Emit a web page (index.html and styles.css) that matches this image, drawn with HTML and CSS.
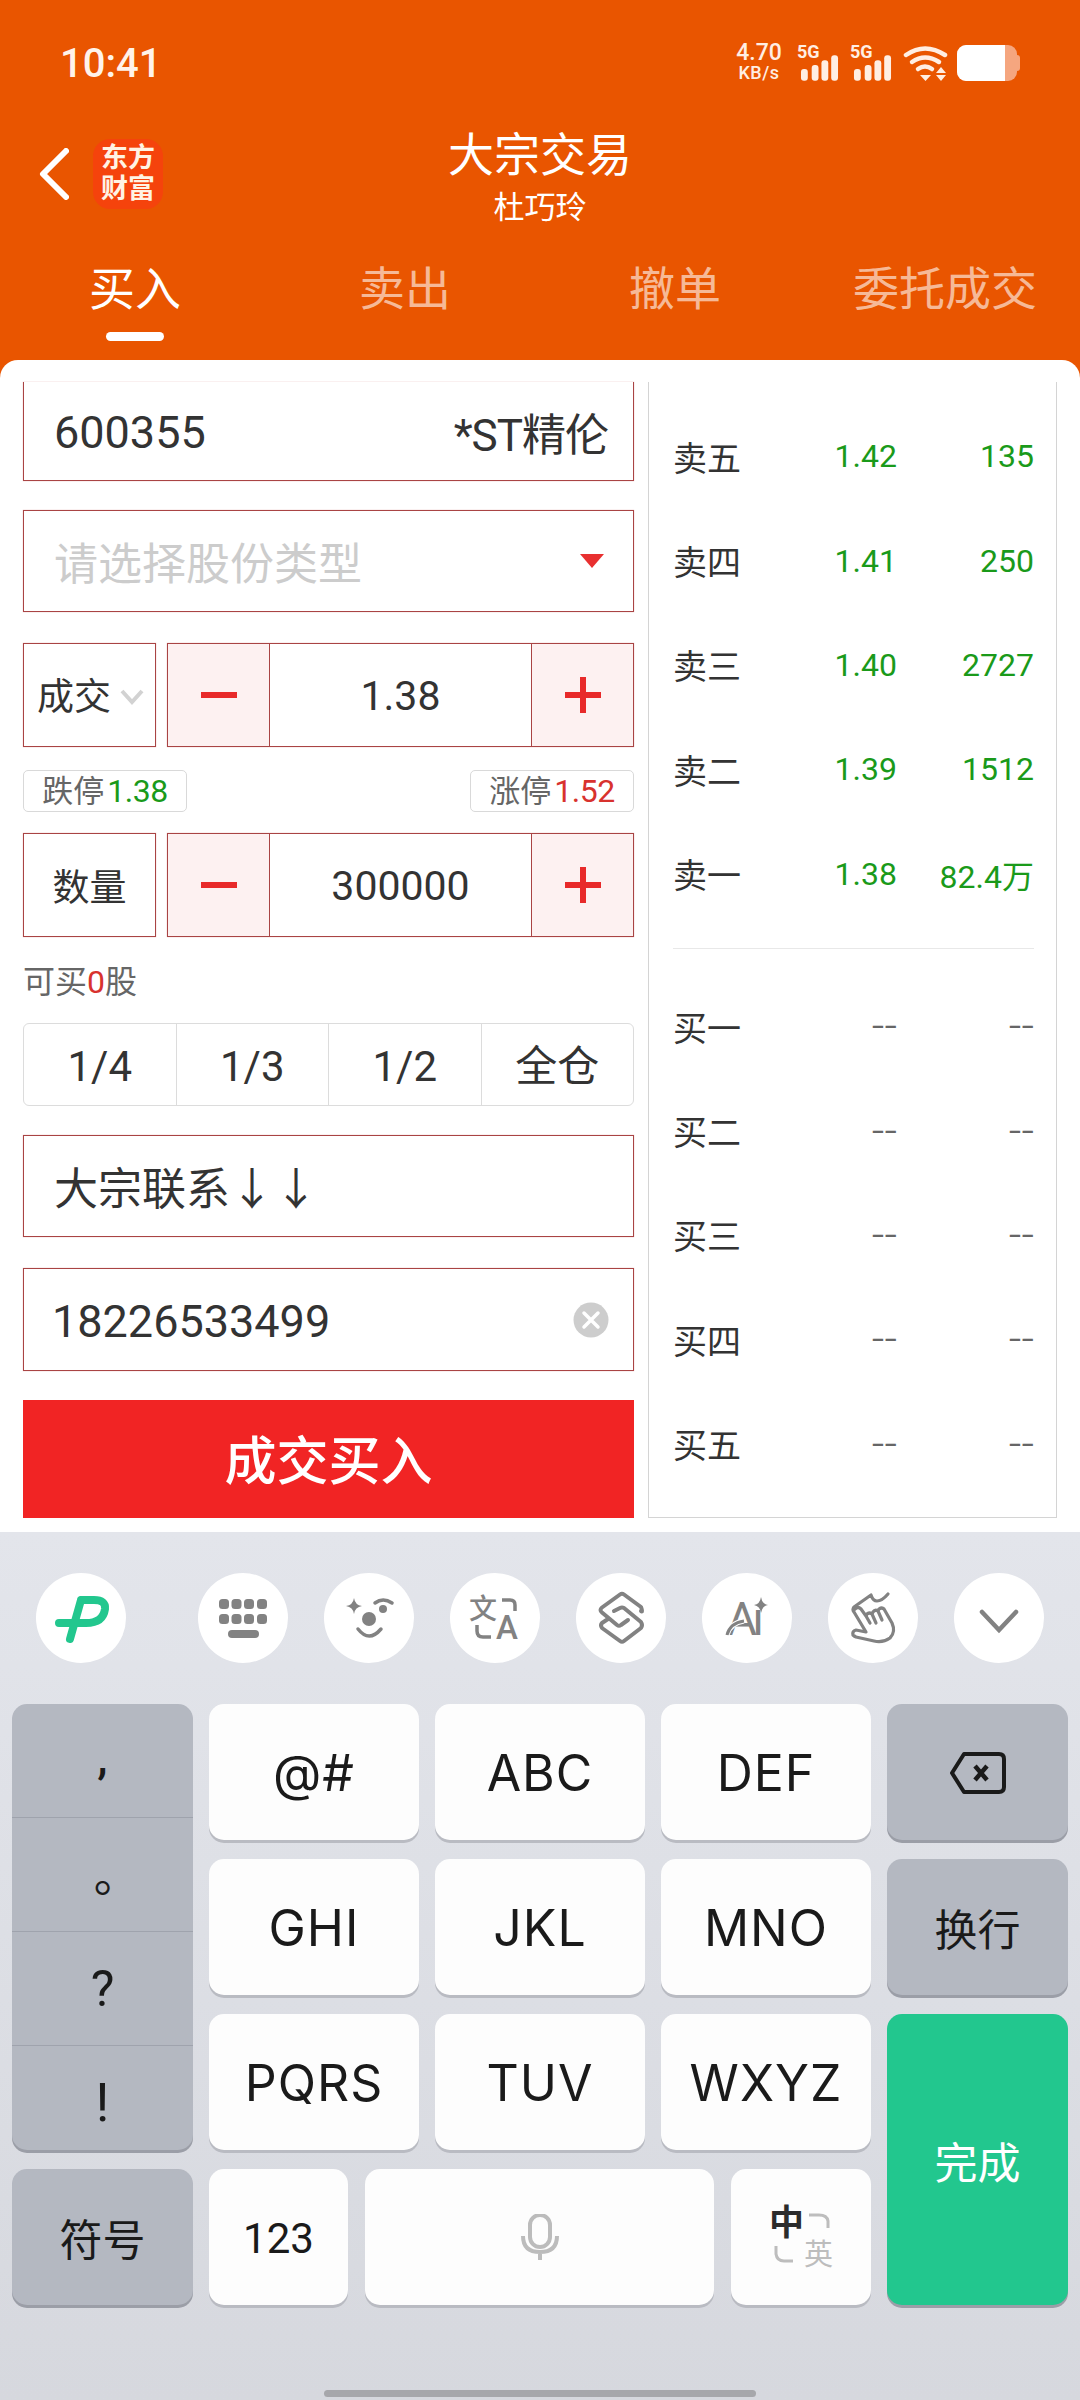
FILE: index.html
```html
<!DOCTYPE html>
<html lang="zh-CN">
<head>
  <meta charset="UTF-8" />
  <meta name="viewport" content="width=device-width, initial-scale=1.0"/>
  <title>大宗交易</title>
  <link rel="stylesheet" href="styles.css">
</head>
<body>
<div class="app">

  <header class="header">
    <div class="status">
      <span class="time">10:41</span>
      <div class="status-icons">
        <div class="speed"><b>4.70</b><small>KB/s</small></div>
        <div class="net">
          <span class="net-label">5G</span>
          <svg class="bars" width="40" height="26" viewBox="0 0 40 26"><rect x="1" y="14" width="7" height="12" rx="3"/><rect x="12" y="10" width="7" height="16" rx="3"/><rect x="22" y="5" width="7" height="21" rx="3"/><rect x="32" y="0" width="7" height="26" rx="3"/></svg>
        </div>
        <div class="net">
          <span class="net-label">5G</span>
          <svg class="bars" width="40" height="26" viewBox="0 0 40 26"><rect x="1" y="14" width="7" height="12" rx="3"/><rect x="12" y="10" width="7" height="16" rx="3"/><rect x="22" y="5" width="7" height="21" rx="3"/><rect x="32" y="0" width="7" height="26" rx="3"/></svg>
        </div>
        <svg class="wifi" width="46" height="36" viewBox="0 0 46 36">
          <g fill="none" stroke="#ffeee3" stroke-width="4.5" stroke-linecap="round">
            <path d="M3 10 Q22 -3 42 10"/>
            <path d="M9 17 Q22 8 36 17"/>
            <path d="M15 24 Q22 19 29 24"/>
          </g>
          <path d="M17 30 H28 L22.500 36 Z M33 28 L38 22 L43 28 Z M33 30 H43 L38 36 Z" fill="#ffeee3"/>
        </svg>
        <div class="battery"><div class="battery-level"></div></div>
      </div>
    </div>

    <div class="nav">
      <div class="nav-left">
        <svg width="30" height="52" viewBox="0 0 30 52"><path d="M27 3 L4 26 L27 49" fill="none" stroke="#fff" stroke-width="6" stroke-linecap="round" stroke-linejoin="round"/></svg>
        <div class="logo">东方<br>财富</div>
      </div>
      <div class="nav-title">
        <div class="title">大宗交易</div>
        <div class="subtitle">杜巧玲</div>
      </div>
    </div>

    <nav class="tabs">
      <div class="tab active">买入</div>
      <div class="tab">卖出</div>
      <div class="tab">撤单</div>
      <div class="tab">委托成交</div>
    </nav>
  </header>

  <main class="panel">
    <section class="form">
      <div class="field field-code">
        <span>600355</span>
        <span class="stock-name">*ST精伦</span>
      </div>

      <div class="field field-type">
        <span class="placeholder">请选择股份类型</span>
        <i class="caret"></i>
      </div>

      <div class="trade-row price-row">
        <div class="label-box">
          <span>成交</span>
          <svg width="24" height="16" viewBox="0 0 24 16"><path d="M2 2 L12 13 L22 2" fill="none" stroke="#d2d2d2" stroke-width="4"/></svg>
        </div>
        <div class="stepper">
          <div class="step step-minus"><svg width="36" height="36" viewBox="0 0 36 36"><rect y="15" width="36" height="6" fill="#e82a2a"/></svg></div>
          <div class="step-value">1.38</div>
          <div class="step step-plus"><svg width="36" height="36" viewBox="0 0 36 36"><path d="M0 15 H15 V0 H21 V15 H36 V21 H21 V36 H15 V21 H0 Z" fill="#e82a2a"/></svg></div>
        </div>
      </div>

      <div class="limits">
        <div class="limit">跌停<span class="green limit-num">1.38</span></div>
        <div class="limit">涨停<span class="red limit-num">1.52</span></div>
      </div>

      <div class="trade-row qty-row">
        <div class="label-box label-center">数量</div>
        <div class="stepper">
          <div class="step step-minus"><svg width="36" height="36" viewBox="0 0 36 36"><rect y="15" width="36" height="6" fill="#e82a2a"/></svg></div>
          <div class="step-value">300000</div>
          <div class="step step-plus"><svg width="36" height="36" viewBox="0 0 36 36"><path d="M0 15 H15 V0 H21 V15 H36 V21 H21 V36 H15 V21 H0 Z" fill="#e82a2a"/></svg></div>
        </div>
      </div>

      <div class="can-buy">可买<span class="red">0</span>股</div>

      <div class="quick">
        <div class="quick-item">1/4</div>
        <div class="quick-item">1/3</div>
        <div class="quick-item">1/2</div>
        <div class="quick-item">全仓</div>
      </div>

      <div class="field field-contact"><span>大宗联系↓↓</span></div>

      <div class="field field-phone">
        <span class="phone">18226533499</span>
        <svg width="36" height="36" viewBox="0 0 36 36"><circle cx="18" cy="18" r="17.500" fill="#cdcdcd"/><path d="M11 11 L25 25 M25 11 L11 25" stroke="#fff" stroke-width="3.500" stroke-linecap="round"/></svg>
      </div>

      <div class="submit">成交买入</div>
    </section>

    <section class="book">
      <div class="book-row"><span class="book-name">卖五</span><span class="green">1.42</span><span class="green">135</span></div>
      <div class="book-row"><span class="book-name">卖四</span><span class="green">1.41</span><span class="green">250</span></div>
      <div class="book-row"><span class="book-name">卖三</span><span class="green">1.40</span><span class="green">2727</span></div>
      <div class="book-row"><span class="book-name">卖二</span><span class="green">1.39</span><span class="green">1512</span></div>
      <div class="book-row"><span class="book-name">卖一</span><span class="green">1.38</span><span class="green">82.4万</span></div>
      <div class="book-line"></div>
      <div class="book-row"><span class="book-name">买一</span><span class="empty">--</span><span class="empty">--</span></div>
      <div class="book-row"><span class="book-name">买二</span><span class="empty">--</span><span class="empty">--</span></div>
      <div class="book-row"><span class="book-name">买三</span><span class="empty">--</span><span class="empty">--</span></div>
      <div class="book-row"><span class="book-name">买四</span><span class="empty">--</span><span class="empty">--</span></div>
      <div class="book-row"><span class="book-name">买五</span><span class="empty">--</span><span class="empty">--</span></div>
    </section>
  </main>

  <footer class="keyboard">
    <div class="toolbar">
      <div class="tool tool-brand">
        <svg viewBox="0 0 90 90"><path d="M45 27 L34 66 M45 27 H58 Q70 27 69 36 Q67 50 50 50 H23" fill="none" stroke="#22c78e" stroke-width="8" stroke-linecap="round" stroke-linejoin="round"/></svg>
      </div>
      <div class="tool">
        <svg viewBox="0 0 90 90" fill="#828282">
          <rect x="21" y="26" width="10" height="10" rx="3.500"/><rect x="33.500" y="26" width="10" height="10" rx="3.500"/><rect x="46" y="26" width="10" height="10" rx="3.500"/><rect x="59" y="26" width="10" height="10" rx="3.500"/>
          <rect x="21" y="41" width="10" height="10" rx="3.500"/><rect x="33.500" y="41" width="10" height="10" rx="3.500"/><rect x="46" y="41" width="10" height="10" rx="3.500"/><rect x="59" y="41" width="10" height="10" rx="3.500"/>
          <rect x="30" y="57" width="31" height="8" rx="4"/>
        </svg>
      </div>
      <div class="tool">
        <svg viewBox="0 0 90 90">
          <path d="M30 25 Q31 32 38 33 Q31 34 30 41 Q29 34 22 33 Q29 32 30 25 Z" fill="#828282"/>
          <circle cx="45" cy="46" r="7" fill="#828282"/>
          <circle cx="59" cy="36" r="4" fill="#828282"/>
          <path d="M51 30 Q59 24 68 30 M34 56 Q45 70 57 56" fill="none" stroke="#828282" stroke-width="3.500" stroke-linecap="round"/>
        </svg>
      </div>
      <div class="tool">
        <svg viewBox="0 0 90 90">
          <text x="19" y="46" class="tool-text tool-bold" font-size="28">文</text>
          <text x="46" y="66" class="tool-text tool-bold" font-size="33">A</text>
          <path d="M52 27 H60 Q65 27 65 32 V38 M27 52 V58 Q27 64 33 64 H41" fill="none" stroke="#828282" stroke-width="3.500"/>
        </svg>
      </div>
      <div class="tool">
        <svg viewBox="0 0 90 90"><path d="M65 38 Q67 40 65 34 L48 21.500 Q46 20 44 21.500 L26 34.500 Q23 37 26 39.500 L41 52 Q43 53.500 45 52 L52 47 M38 38 L44 35 Q46 34 48 35 L65 49 Q67 52 65 55 L48 68 Q46 69.500 44 68 L26 55 Q24 52 26 50 L32 46" fill="none" stroke="#828282" stroke-width="4" stroke-linecap="round" stroke-linejoin="round"/></svg>
      </div>
      <div class="tool">
        <svg viewBox="0 0 90 90">
          <text x="25" y="62" class="tool-text" font-size="46" textLength="37">Aı</text>
          <path d="M25 62 Q28 50 42 48" fill="none" stroke="#fff" stroke-width="5"/>
          <path d="M25 62 Q28 50 42 48" fill="none" stroke="#828282" stroke-width="3"/>
          <path d="M59 24 Q60 31 66 32 Q60 33 59 40 Q58 33 52 32 Q58 31 59 24 Z" fill="#828282"/>
        </svg>
      </div>
      <div class="tool">
        <svg viewBox="0 0 90 90"><path d="M60 21 Q54 28 49 28 Q45 28 43 22 L26 34 Q24 37 26 39 L38 59 L28 57 Q24 58 25 62 Q26 63 28 64 L46 68 Q55 70 62 65 Q68 59 64 50 L56 36 Q54 34 51 36 L50 38 Q47 36 45 39 L44 41 Q41 39 39 41 L38 43 L33 36 Q30 33 27 36 M44 41 L48 50 M50 38 L54 47 M38 43 L42 50" fill="none" stroke="#828282" stroke-width="3.200" stroke-linecap="round" stroke-linejoin="round"/></svg>
      </div>
      <div class="tool">
        <svg viewBox="0 0 90 90"><path d="M28 39 L45 57 L62 39" fill="none" stroke="#828282" stroke-width="4.500" stroke-linecap="round"/></svg>
      </div>
    </div>

    <div class="keys">
      <div class="key-symbols">
        <div class="symbol sym-comma">,</div>
        <div class="symbol sym-stop">。</div>
        <div class="symbol sym-mark">?</div>
        <div class="symbol sym-mark">!</div>
      </div>
      <div class="key">@#</div>
      <div class="key">ABC</div>
      <div class="key">DEF</div>
      <div class="key key-gray">
        <svg width="58" height="44" viewBox="0 0 58 44"><path d="M15 3 H50 Q55 3 55 8 V36 Q55 41 50 41 H15 L3 22 Z" fill="none" stroke="#1a1a1a" stroke-width="4" stroke-linejoin="round"/><path d="M26 15 L38 29 M38 15 L26 29" stroke="#1a1a1a" stroke-width="4.500"/></svg>
      </div>
      <div class="key">GHI</div>
      <div class="key">JKL</div>
      <div class="key">MNO</div>
      <div class="key key-gray key-cn">换行</div>
      <div class="key">PQRS</div>
      <div class="key">TUV</div>
      <div class="key">WXYZ</div>
      <div class="key key-done">完成</div>
      <div class="key key-gray key-cn">符号</div>
      <div class="bottom-keys">
        <div class="key key-num">123</div>
        <div class="key key-space">
          <svg width="38" height="46" viewBox="0 0 38 46"><rect x="9" y="1" width="20" height="32" rx="10" fill="none" stroke="#bcbcbc" stroke-width="4"/><path d="M2 22 Q2 38 19 38 Q36 38 36 22 M19 38 V46" fill="none" stroke="#bcbcbc" stroke-width="4"/></svg>
        </div>
        <div class="key key-lang">
          <svg width="64" height="66" viewBox="0 0 64 66">
            <text x="0" y="31" class="lang-on">中</text>
            <text x="35" y="61" class="lang-off">英</text>
            <path d="M40 11 H50 Q58 11 59 17 V24 M7 42 V50 Q8 57 15 57 H24" fill="none" stroke="#bdbdbd" stroke-width="3"/>
          </svg>
        </div>
      </div>
    </div>

    <div class="home-bar"></div>
  </footer>
</div>
</body>
</html>
```

FILE: styles.css
```css
* {
  box-sizing: border-box;
}
body {
  margin: 0;
  font-family: Roboto, "Noto Sans CJK SC", sans-serif;
  color: #333;
}
.app {
  width: 1080px;
  height: 2400px;
  background: #e95500;
  display: flex;
  flex-direction: column;
  overflow: hidden;
}
.green {
  color: #1a9a1a;
}
.red {
  color: #d8322e;
}

/* header */
.header {
  height: 360px;
  color: #fff;
}
.status {
  height: 126px;
  padding: 0 60px;
  display: flex;
  align-items: center;
  justify-content: space-between;
}
.time {
  font-size: 40px;
  font-weight: 500;
  color: #fff3ea;
}
.status-icons {
  display: flex;
  align-items: center;
  color: #ffeee3;
}
.speed {
  width: 48px;
  margin-right: 16px;
  display: flex;
  flex-direction: column;
  align-items: center;
  font-weight: 500;
  line-height: 20px;
}
.speed b {
  font-size: 23px;
  font-weight: 500;
}
.speed small {
  font-size: 18px;
  letter-spacing: 0.5px;
}
.net {
  width: 40px;
  margin-right: 13px;
  height: 36px;
  display: flex;
  align-items: flex-end;
  position: relative;
}
.net-label {
  position: absolute;
  left: -2px;
  top: -3px;
  font-size: 18px;
  line-height: 20px;
  font-weight: 700;
}
.bars {
  display: block;
  fill: #ffeee3;
  margin-left: 1px;
}
.wifi {
  margin-left: -2px;
  margin-right: 8px;
}
.battery {
  width: 60px;
  height: 36px;
  margin-right: 3px;
  border-radius: 9px;
  background: #f5a67f;
  position: relative;
}
.battery::after {
  content: "";
  position: absolute;
  right: -3px;
  top: 10px;
  width: 3px;
  height: 16px;
  border-radius: 0 3px 3px 0;
  background: #f5a67f;
}
.battery-level {
  width: 48px;
  height: 100%;
  background: #fff;
  border-radius: 9px 0 0 9px;
}

.nav {
  height: 104px;
  display: grid;
  grid-template-columns: 1fr auto 1fr;
  align-items: center;
}
.nav-left {
  padding-left: 39px;
  margin-bottom: 10px;
  display: flex;
  align-items: center;
  gap: 24px;
}
.logo {
  width: 70px;
  height: 70px;
  flex: none;
  border-radius: 17px;
  background: #f5430c;
  color: #fff3e4;
  font-size: 27px;
  font-weight: 700;
  line-height: 31px;
  text-align: center;
  padding-top: 4px;
}
.nav-title {
  text-align: center;
}
.title {
  font-size: 46px;
  line-height: 58px;
}
.subtitle {
  font-size: 31px;
  line-height: 46px;
  padding-top: 1px;
}

.tabs {
  display: flex;
  padding-top: 32px;
}
.tab {
  width: 270px;
  text-align: center;
  font-size: 46px;
  line-height: 54px;
  color: rgba(255, 255, 255, 0.6);
  position: relative;
}
.tab.active {
  color: #fff;
}
.tab.active::after {
  content: "";
  position: absolute;
  left: 106px;
  top: 70px;
  width: 58px;
  height: 9px;
  border-radius: 5px;
  background: #fff;
}

/* order form and book */
.panel {
  height: 1172px;
  background: #fff;
  border-radius: 18px 18px 0 0;
  padding: 22px 0 0 23px;
  display: flex;
  gap: 14px;
}
.form {
  width: 611px;
  display: flex;
  flex-direction: column;
}
.field {
  border: 1px solid #a94444;
  box-shadow: 0 0 1px rgba(200, 90, 90, 0.5);
  padding: 0 29px 0 30px;
  display: flex;
  align-items: center;
  justify-content: space-between;
  font-size: 45px;
  flex: none;
}
.field-code {
  height: 99px;
  border-top: none;
  padding-top: 2px;
  padding-right: 25px;
}
.stock-name {
  font-size: 44px;
  letter-spacing: -1px;
}
.field-type {
  height: 102px;
  margin-top: 29px;
  font-size: 44px;
}
.placeholder {
  color: #ccc;
}
.caret {
  width: 0;
  height: 0;
  border-left: 12px solid transparent;
  border-right: 12px solid transparent;
  border-top: 14px solid #e83030;
}
.trade-row {
  display: flex;
  gap: 11px;
  height: 104px;
  flex: none;
}
.price-row {
  margin-top: 31px;
}
.qty-row {
  margin-top: 21px;
}
.label-box {
  width: 133px;
  border: 1px solid #a94444;
  box-shadow: 0 0 1px rgba(200, 90, 90, 0.5);
  font-size: 37px;
  display: flex;
  align-items: center;
  padding: 0 0 2px 13px;
  gap: 9px;
}
.label-box svg {
  margin-top: 6px;
}
.label-center {
  justify-content: center;
  padding: 0;
}
.stepper {
  flex: 1;
  border: 1px solid #a94444;
  box-shadow: 0 0 1px rgba(200, 90, 90, 0.5);
  display: flex;
}
.step {
  width: 102px;
  background: #fdf1f1;
  display: flex;
  align-items: center;
  justify-content: center;
}
.step-minus {
  border-right: 1px solid #a94444;
}
.step-plus {
  border-left: 1px solid #a94444;
}
.step-value {
  flex: 1;
  text-align: center;
  font-size: 41px;
  line-height: 105px;
}
.limits {
  display: flex;
  justify-content: space-between;
  margin-top: 23px;
  flex: none;
}
.limit {
  width: 164px;
  height: 42px;
  border: 1px solid #d9d9d9;
  border-radius: 5px;
  font-size: 31px;
  line-height: 40px;
  color: #666;
  text-align: center;
  white-space: nowrap;
}
.limit-num {
  font-size: 32px;
  letter-spacing: -0.5px;
  margin-left: 3px;
}
.can-buy {
  height: 86px;
  flex: none;
  font-size: 32px;
  line-height: 90px;
  color: #666;
}
.quick {
  height: 83px;
  flex: none;
  border: 1px solid #dcdcdc;
  border-radius: 6px;
  display: flex;
}
.quick-item {
  flex: 1;
  text-align: center;
  font-size: 42px;
  line-height: 85px;
  border-left: 1px solid #dcdcdc;
}
.quick-item:first-child {
  border-left: none;
}
.field-contact {
  height: 102px;
  margin-top: 29px;
  font-size: 44px;
}
.field-phone {
  height: 103px;
  margin-top: 31px;
  padding-right: 24px;
}
.phone {
  margin-left: -2px;
  padding-top: 4px;
}
.submit {
  height: 118px;
  margin-top: 29px;
  flex: none;
  background: #f12424;
  color: #fff;
  font-size: 52px;
  font-weight: 500;
  display: flex;
  align-items: center;
  justify-content: center;
  padding-bottom: 4px;
}

.book {
  width: 409px;
  height: 1136px;
  border: 1px solid #d4d4d4;
  border-top: none;
  padding: 22px 22px 0 24px;
}
.book-row {
  height: 104.400px;
  display: grid;
  grid-template-columns: 98px 126px 137px;
  align-items: center;
  font-size: 32px;
  text-align: right;
}
.book-name {
  text-align: left;
  font-size: 34px;
}
.empty {
  color: #666;
  font-size: 44px;
  font-weight: 300;
}
.book-line {
  height: 1px;
  background: #e8e8e8;
  margin: 22px 0 25px;
}

/* on-screen keyboard */
.keyboard {
  flex: 1;
  background: linear-gradient(#e3e5eb, #d6d8de);
  color: #1a1a1a;
}
.toolbar {
  padding: 41px 0 0 36px;
  display: flex;
  gap: 36px;
}
.tool {
  width: 90px;
  height: 90px;
  border-radius: 50%;
  background: #fff;
  flex: none;
}
.tool svg {
  display: block;
  width: 90px;
  height: 90px;
}
.tool-brand {
  margin-right: 36px;
}
.tool-text {
  fill: #828282;
  font-family: Roboto, "Noto Sans CJK SC", sans-serif;
}
.tool-bold {
  font-weight: 500;
}
.keys {
  margin: 41px 12px 0;
  display: grid;
  grid-template-columns: 181px 210px 210px 210px 181px;
  grid-template-rows: repeat(4, 136px);
  gap: 19px 16px;
}
.key {
  background: #fdfdfd;
  border-radius: 15px;
  box-shadow: 0 3px 0 #b9bbc2;
  display: flex;
  align-items: center;
  justify-content: center;
  padding-top: 2px;
  font-family: Inter, "Noto Sans CJK SC", sans-serif;
  font-size: 50px;
  letter-spacing: 1px;
}
.key-gray {
  background: #b4b8c1;
  box-shadow: 0 3px 0 #9b9ea7;
}
.key-cn {
  font-family: "Noto Sans CJK SC", sans-serif;
  font-size: 43px;
  letter-spacing: 0;
  padding-top: 0;
}
.key-symbols {
  grid-row: 1 / span 3;
  background: #b4b8c1;
  border-radius: 15px;
  box-shadow: 0 3px 0 #9b9ea7;
  display: flex;
  flex-direction: column;
}
.symbol {
  height: 114px;
  display: flex;
  align-items: center;
  justify-content: center;
  border-top: 1px solid #9fa3ad;
  font-size: 50px;
}
.symbol:first-child {
  height: 113px;
  border-top: none;
}
.symbol:last-child {
  flex: 1;
  height: auto;
  padding-top: 8px;
  font-size: 54px;
}
.sym-comma {
  font-size: 46px;
  font-weight: 500;
  padding-bottom: 8px;
}
.sym-stop {
  font-family: "Noto Sans CJK TC", sans-serif;
  font-size: 46px;
  padding-top: 20px;
}
.key-done {
  grid-column: 5;
  grid-row: 3 / span 2;
  background: #22c78e;
  box-shadow: 0 3px 0 #9b9ea7;
  color: #fff;
  font-family: "Noto Sans CJK SC", sans-serif;
  font-size: 43px;
  letter-spacing: 0;
  padding-top: 0;
}
.bottom-keys {
  grid-column: 2 / span 3;
  display: flex;
  gap: 17px;
}
.key-num {
  width: 139px;
  font-family: Roboto, sans-serif;
  font-size: 42px;
  letter-spacing: 0;
}
.key-space {
  flex: 1;
  padding-top: 0;
}
.key-lang {
  width: 140px;
  padding-top: 0;
}
.lang-on {
  fill: #2b2b2b;
  font-size: 35px;
  font-weight: 700;
  font-family: "Noto Sans CJK SC", sans-serif;
}
.lang-off {
  fill: #bdbdbd;
  font-size: 29px;
  font-family: "Noto Sans CJK SC", sans-serif;
}
.home-bar {
  width: 432px;
  height: 7px;
  margin: 85px auto 0;
  border-radius: 4px;
  background: #a6a7ab;
}
```
